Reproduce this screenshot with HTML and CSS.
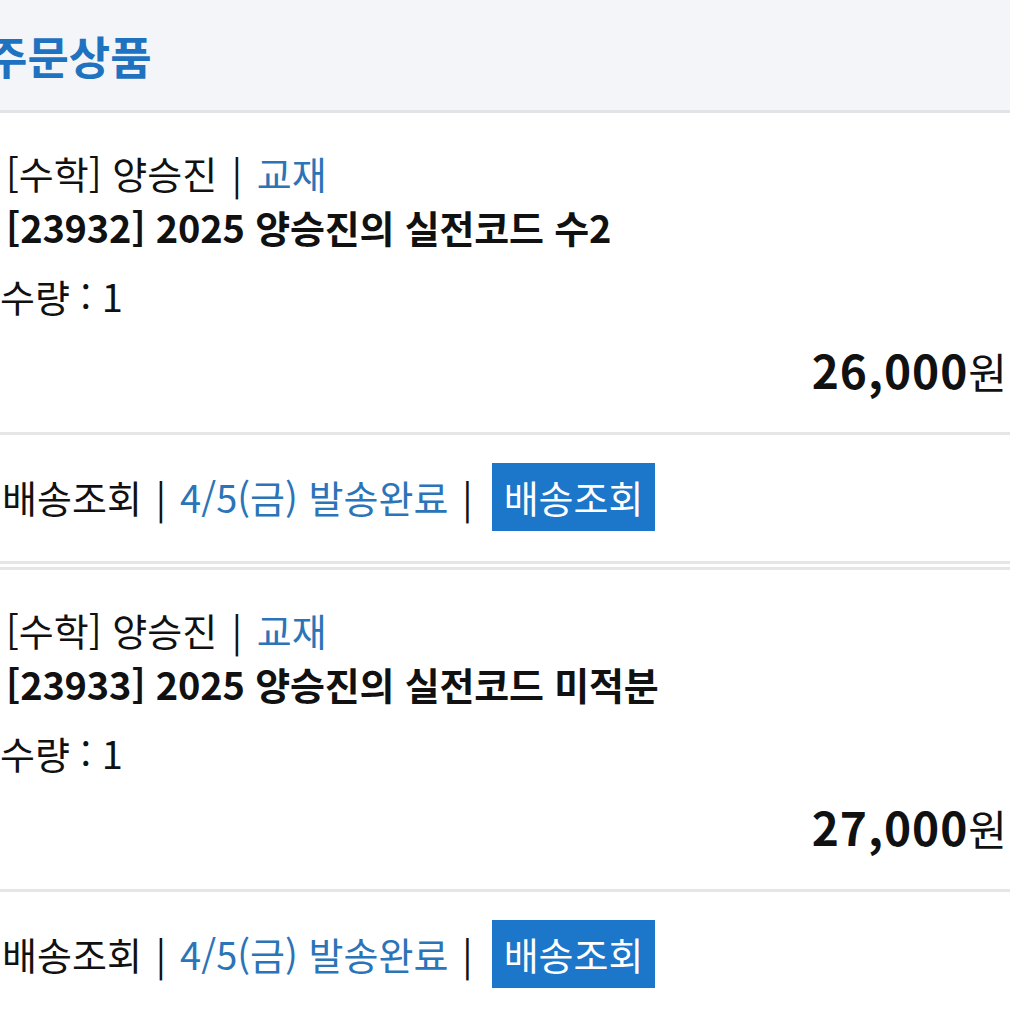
FILE: index.html
```html
<!DOCTYPE html>
<html lang="ko">
<head>
  <meta charset="UTF-8">
  <title>주문상품</title>
  <link rel="stylesheet" href="styles.css">
</head>
<body>

<div class="page-head">
  <h2 class="page-title">주문상품</h2>
</div>

<div class="order">
  <div class="order-info">
    <p class="order-cat">[수학] 양승진 <span class="bar">|</span> <span class="blue">교재</span></p>
    <p class="order-name">[23932] 2025 양승진의 실전코드 수2</p>
    <p class="order-qty">수량 : 1</p>
    <p class="order-price">26,000<span class="won">원</span></p>
  </div>
  <div class="ship-row">
    <span>배송조회</span>
    <span class="bar">|</span>
    <span class="blue">4/5(금) 발송완료</span>
    <span class="bar">|</span>
    <button class="ship-btn" type="button">배송조회</button>
  </div>
</div>

<div class="order">
  <div class="order-info">
    <p class="order-cat">[수학] 양승진 <span class="bar">|</span> <span class="blue">교재</span></p>
    <p class="order-name">[23933] 2025 양승진의 실전코드 미적분</p>
    <p class="order-qty">수량 : 1</p>
    <p class="order-price">27,000<span class="won">원</span></p>
  </div>
  <div class="ship-row">
    <span>배송조회</span>
    <span class="bar">|</span>
    <span class="blue">4/5(금) 발송완료</span>
    <span class="bar">|</span>
    <button class="ship-btn" type="button">배송조회</button>
  </div>
</div>

</body>
</html>
```

FILE: styles.css
```css
body {
  margin: 0;
  font-family: "Noto Sans CJK KR", "Noto Sans", sans-serif;
  color: #111;
  background-color: #fff;
  overflow: hidden;
}
p {
  margin: 0;
}
.blue {
  color: #2b74b8;
}
.bar {
  margin: 0 4px;
}
.page-head {
  height: 110px;
  background-color: #f4f5f8;
  border-bottom: 3px solid #e2e3e6;
  display: flex;
  align-items: center;
}
.page-title {
  margin: 0 0 0 -14px;
  font-size: 45px;
  font-weight: bold;
  color: #1f72bf;
  letter-spacing: 0;
}
.order {
  border-bottom: 3px solid #e6e6e6;
}
.order + .order {
  margin-top: 3px;
  border-top: 3px solid #e6e6e6;
}
.order-info {
  padding: 33px 0 34px 6px;
  border-bottom: 3px solid #e6e6e6;
}
.order-cat {
  font-size: 38px;
  line-height: 54px;
}
.order-name {
  font-size: 38px;
  font-weight: bold;
  line-height: 54px;
  letter-spacing: -0.2px;
}
.order-qty {
  margin: 15px 0 0 -6px;
  font-size: 38px;
  line-height: 54px;
}
.order-price {
  margin-top: 19px;
  padding-right: 3px;
  text-align: right;
  font-size: 46px;
  font-weight: bold;
  line-height: 54px;
  letter-spacing: 1px;
}
.order-price .won {
  font-size: 42px;
  font-weight: normal;
  letter-spacing: 0;
}
.ship-row {
  height: 123px;
  padding: 0 0 3px 2px;
  display: flex;
  align-items: center;
  gap: 14px;
  font-size: 38px;
}
.ship-row .bar {
  margin: 0;
}
.ship-btn {
  height: 68px;
  margin-left: 5px;
  padding: 0 12px;
  border: none;
  background-color: #1c76c9;
  color: #fff;
  font-family: inherit;
  font-size: 38px;
}
```
